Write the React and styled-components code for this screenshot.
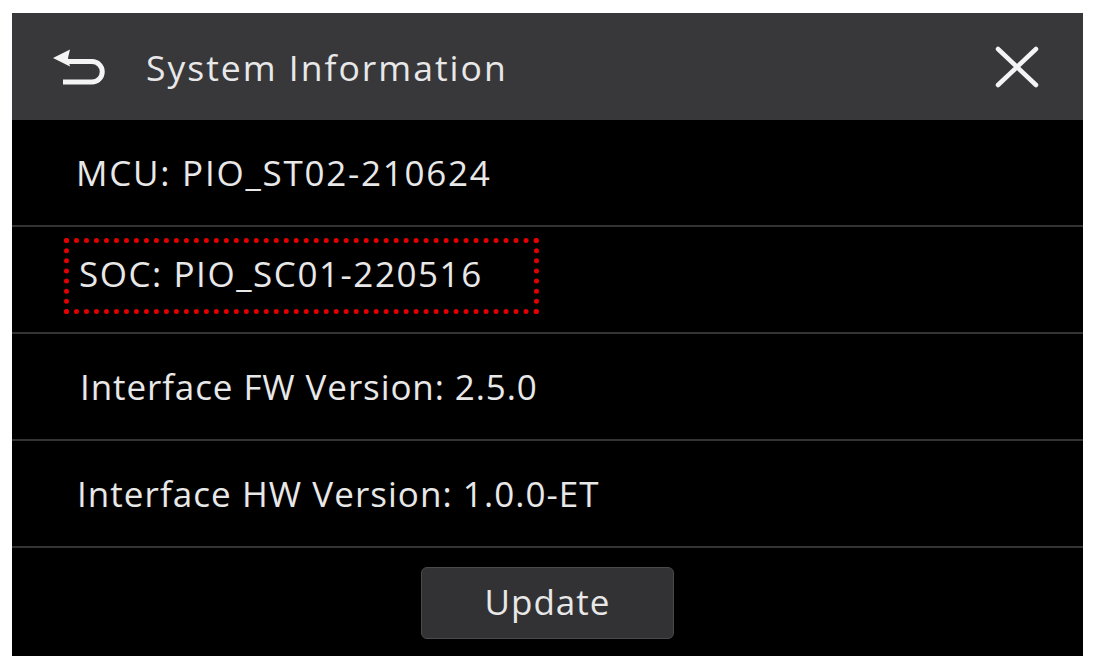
import React from "react";
import styled, { createGlobalStyle } from "styled-components";

const Global = createGlobalStyle`
  html, body { margin: 0; padding: 0; background: #ffffff; }
  body { font-family: "Open Sans", "Noto Sans", sans-serif; }
`;

const Screen = styled.div`
  margin: 13px 0 0 12px;
  width: 1071px;
  height: 643px;
  background: #000000;
  display: flex;
  flex-direction: column;
  color: #e8e8e8;
`;

const Header = styled.header`
  height: 107px;
  flex: none;
  background: #38383b;
  display: flex;
  align-items: center;
  padding: 0 44px 0 38px;
  box-sizing: border-box;
`;

const IconButton = styled.button`
  background: none;
  border: 0;
  padding: 0;
  margin: 0;
  display: flex;
  align-items: center;
  justify-content: center;
  color: #f2f2f2;
  cursor: pointer;
`;

const Title = styled.h1`
  margin: 0 0 0 38px;
  font-size: 35.5px;
  font-weight: 400;
  letter-spacing: 2px;
  color: #e8e8e8;
  flex: 1;
`;

const List = styled.div`
  display: flex;
  flex-direction: column;
`;

const Row = styled.div`
  height: 107px;
  box-sizing: border-box;
  border-bottom: 2px solid #333334;
  display: flex;
  align-items: center;
  padding-left: ${(p) => p.$indent}px;
  font-size: 35px;
  letter-spacing: ${(p) => p.$tracking}px;
`;

const Highlight = styled.span`
  display: inline-block;
  border: 5px dotted #e30000;
  padding: 7px 0 12px 10px;
  width: 475px;
  box-sizing: border-box;
  margin-top: -8px;
`;

const Footer = styled.div`
  flex: 1;
  display: flex;
  align-items: center;
  justify-content: center;
  padding-top: 2px;
`;

const UpdateButton = styled.button`
  width: 253px;
  height: 72px;
  background: #323234;
  border: 1.5px solid #4a4a4c;
  border-radius: 6px;
  color: #e8e8e8;
  font-family: "Open Sans", "Noto Sans", sans-serif;
  font-size: 35px;
  letter-spacing: 1px;
  padding: 0 0 4px;
  cursor: pointer;
`;

const BackIcon = () => (
  <svg width="58" height="42" viewBox="0 0 58 42">
    <polygon points="3,12 20,3.5 18,12 20,20.5" fill="#f4f4f4" />
    <path
      d="M17 15.5 H42 A10.25 10.25 0 0 1 42 36 H13"
      fill="none"
      stroke="#f4f4f4"
      strokeWidth="5"
    />
  </svg>
);

const CloseIcon = () => (
  <svg width="44" height="42" viewBox="0 0 44 42">
    <path
      d="M3 3 L41 39 M41 3 L3 39"
      stroke="#f4f4f4"
      strokeWidth="4.5"
      strokeLinecap="round"
      fill="none"
    />
  </svg>
);

export default function App() {
  return (
    <>
      <Global />
      <Screen>
        <Header>
          <IconButton aria-label="Back">
            <BackIcon />
          </IconButton>
          <Title>System Information</Title>
          <IconButton aria-label="Close">
            <CloseIcon />
          </IconButton>
        </Header>
        <List>
          <Row $indent={64} $tracking={1.75}>MCU: PIO_ST02-210624</Row>
          <Row $indent={52} $tracking={1.55}>
            <Highlight>SOC: PIO_SC01-220516</Highlight>
          </Row>
          <Row $indent={68} $tracking={0.9}>Interface FW Version: 2.5.0</Row>
          <Row $indent={65} $tracking={1.05}>Interface HW Version: 1.0.0-ET</Row>
        </List>
        <Footer>
          <UpdateButton>Update</UpdateButton>
        </Footer>
      </Screen>
    </>
  );
}
